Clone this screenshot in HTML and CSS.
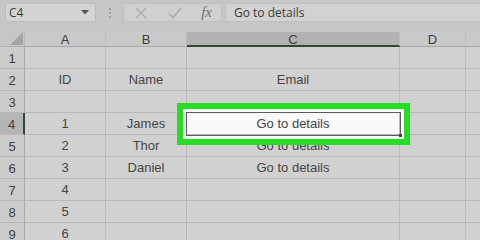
FILE: index.html
```html
<!DOCTYPE html>
<html>
<head>
<meta charset="utf-8">
<link rel="stylesheet" href="styles.css">
</head>
<body>
<div class="app">
  <div class="toolbar">
    <div class="namebox">
      <span class="nb-text">C4</span>
      <svg class="nb-arrow" width="8" height="5" viewBox="0 0 8 5"><path d="M0 0 L8 0 L4 4.5 Z" fill="#555"/></svg>
    </div>
    <div class="grip"><i></i><i></i><i></i></div>
    <div class="fxbuttons">
      <svg class="ico" width="14" height="14" viewBox="0 0 14 14"><path d="M2 2 L12 12 M12 2 L2 12" stroke="#a9a9a9" stroke-width="1.3" fill="none"/></svg>
      <svg class="ico" width="16" height="14" viewBox="0 0 16 14"><path d="M2 7.5 L6 11.5 L14 2" stroke="#a9a9a9" stroke-width="1.6" fill="none"/></svg>
      <span class="fx">fx</span>
    </div>
    <div class="formula">Go to details</div>
  </div>
  <div class="sheet">
    <div class="corner"><svg width="13" height="13" viewBox="0 0 13 13"><path d="M13 0 L13 13 L0 13 Z" fill="#a5a5a5"/></svg></div>
    <div class="ch">A</div>
    <div class="ch">B</div>
    <div class="ch sel">C</div>
    <div class="ch">D</div>
    <div class="ch last"></div>

    <div class="rh">1</div><div class="c"></div><div class="c"></div><div class="c"></div><div class="c"></div><div class="c last"></div>
    <div class="rh">2</div><div class="c">ID</div><div class="c">Name</div><div class="c">Email</div><div class="c"></div><div class="c last"></div>
    <div class="rh">3</div><div class="c"></div><div class="c"></div><div class="c"></div><div class="c"></div><div class="c last"></div>
    <div class="rh sel">4</div><div class="c">1</div><div class="c">James</div><div class="c active"><span class="ring"></span><span class="txt">Go to details</span></div><div class="c"></div><div class="c last"></div>
    <div class="rh">5</div><div class="c">2</div><div class="c">Thor</div><div class="c">Go to details</div><div class="c"></div><div class="c last"></div>
    <div class="rh">6</div><div class="c">3</div><div class="c">Daniel</div><div class="c">Go to details</div><div class="c"></div><div class="c last"></div>
    <div class="rh">7</div><div class="c">4</div><div class="c"></div><div class="c"></div><div class="c"></div><div class="c last"></div>
    <div class="rh">8</div><div class="c">5</div><div class="c"></div><div class="c"></div><div class="c"></div><div class="c last"></div>
    <div class="rh">9</div><div class="c">6</div><div class="c"></div><div class="c"></div><div class="c"></div><div class="c last"></div>
  </div>
</div>
</body>
</html>
```
FILE: styles.css
```css
html, body {
  margin: 0;
  padding: 0;
  width: 480px;
  height: 240px;
  overflow: hidden;
  background: #d0d0d0;
}
.app {
  width: 480px;
  height: 240px;
  overflow: hidden;
  font-family: "Liberation Sans", Arial, sans-serif;
}
.toolbar {
  height: 32px;
  background: #c6c6c6;
  display: flex;
  align-items: flex-start;
  padding-top: 3px;
  box-sizing: border-box;
}
.namebox {
  margin-left: 5px;
  width: 91px;
  height: 19px;
  box-sizing: border-box;
  background: #d4d4d4;
  border: 1px solid #bcbcbc;
  display: flex;
  align-items: center;
  justify-content: space-between;
  padding: 0 6px 0 3px;
  font-family: "Open Sans", sans-serif;
  font-size: 12px;
  color: #3c3c3c;
}
.nb-text { line-height: 17px; }
.grip {
  width: 27px;
  height: 19px;
  display: flex;
  flex-direction: column;
  align-items: center;
  justify-content: center;
  gap: 2px;
}
.grip i {
  display: block;
  width: 2px;
  height: 2px;
  background: #a2a2a2;
}
.fxbuttons {
  width: 99px;
  height: 19px;
  box-sizing: border-box;
  background: #d0d0d0;
  border: 1px solid #c0c0c0;
  display: flex;
  align-items: center;
  justify-content: space-between;
  padding: 0 9px 0 10px;
}
.fx {
  font-family: "Liberation Serif", serif;
  font-style: italic;
  font-size: 15px;
  color: #707070;
  line-height: 17px;
}
.formula {
  margin-left: 3px;
  flex: 1;
  height: 19px;
  box-sizing: border-box;
  background: #d2d2d2;
  border: 1px solid #c0c0c0;
  border-right: none;
  padding-left: 8px;
  font-family: "Open Sans", sans-serif;
  font-size: 12px;
  line-height: 17px;
  color: #3a3a3a;
}
.sheet {
  display: grid;
  grid-template-columns: 25px 81px 81px 213px 66px 1fr;
  grid-template-rows: 15px repeat(9, 22px);
  background: #d1d1d1;
}
.corner, .ch, .rh, .c {
  box-sizing: border-box;
  border-right: 1px solid #b9b9b9;
  border-bottom: 1px solid #b9b9b9;
  display: flex;
  align-items: center;
  justify-content: center;
  color: #454545;
  font-size: 13px;
}
.corner {
  background: #c6c6c6;
  justify-content: flex-end;
  align-items: flex-end;
  padding: 0 1px 1px 0;
  border-bottom-color: #b0b0b0;
}
.ch {
  background: #c9c9c9;
  font-size: 13px;
  color: #3e3e3e;
  padding-top: 1px;
  border-right-color: #bcbcbc;
  border-bottom-color: #a8a8a8;
}
.ch.sel {
  background: #b2b2b2;
  border-bottom: 2px solid #2f4a34;
}
.rh {
  background: #cbcbcb;
  border-right-color: #a8a8a8;
  font-size: 13px;
  color: #3e3e3e;
  padding-top: 2px;
}
.rh.sel {
  background: #b5b5b5;
  border-right: 2px solid #2f4a34;
}
.c.last, .ch.last { border-right: none; }
.c.active {
  position: relative;
  background: #f9f9f9;
  z-index: 2;
}
.c.active .txt { position: relative; z-index: 3; }
.ring {
  position: absolute;
  left: -1px;
  top: -1px;
  right: -2px;
  bottom: -2px;
  border: 1.5px solid #5c5c5c;
  box-shadow: 0 0 0 3px #fbfbfb, 0 0 0 9px #26dd26;
  pointer-events: none;
}
.ring::after {
  content: "";
  position: absolute;
  right: -2px;
  bottom: -2px;
  width: 3px;
  height: 3px;
  background: #444;
}
```
